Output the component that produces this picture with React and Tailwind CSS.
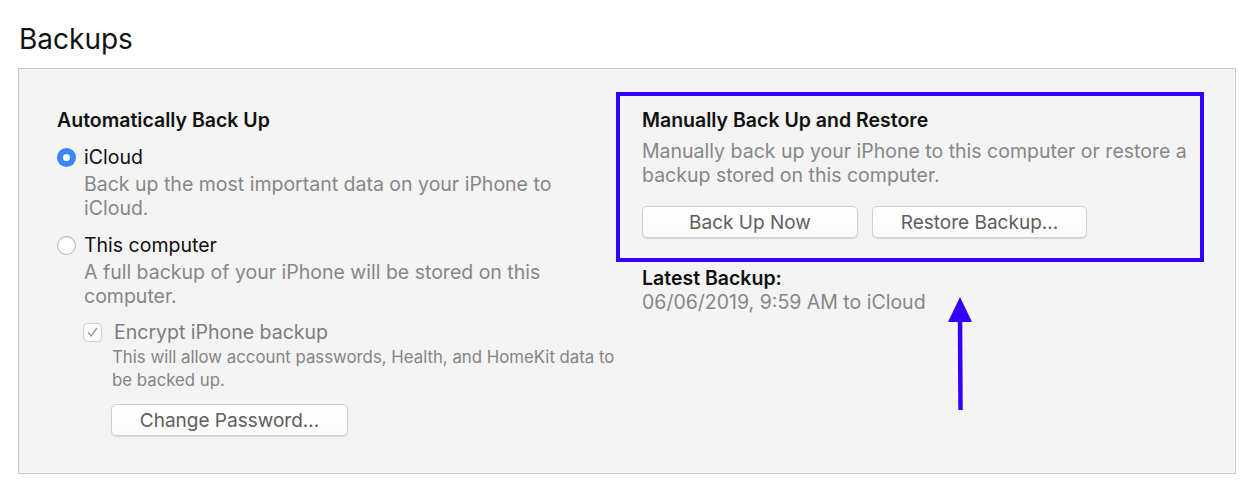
import React from "react";

function Radio({ checked }) {
  return checked ? (
    <span className="flex h-[19px] w-[19px] shrink-0 items-center justify-center rounded-full bg-[#3a86f7]">
      <span className="h-[7px] w-[7px] rounded-full bg-white" />
    </span>
  ) : (
    <span className="h-[19px] w-[19px] shrink-0 rounded-full border border-[#b5b5b5] bg-white shadow-[inset_0_1px_1px_rgba(0,0,0,0.08)]" />
  );
}

function Btn({ children, w }) {
  return (
    <button
      className={`h-[32px] ${w} rounded-[5px] border border-[#d0d0d0] bg-gradient-to-b from-white to-[#fbfbfb] text-[19px] leading-none text-[#5e5e5e] shadow-[0_1px_1px_rgba(0,0,0,0.12)]`}
    >
      {children}
    </button>
  );
}

export default function App() {
  return (
    <div
      className="relative h-[491px] w-[1253px] overflow-hidden bg-white"
      style={{ fontFamily: "Inter, 'Noto Sans', sans-serif" }}
    >
      <div className="pl-[19px] pt-[22px] text-[28px] leading-[34px] text-[#111]">Backups</div>
      <div className="ml-[18px] mt-[12px] flex h-[406px] w-[1218px] border border-[#c8c8c8] bg-[#f4f4f4]">
        {/* left column */}
        <div className="w-[597px] shrink-0 pl-[38px] pt-[39px]">
          <div className="text-[19.5px] font-semibold leading-[24px] text-[#111]">Automatically Back Up</div>
          <div className="mt-[13px] flex items-center gap-[8px]">
            <Radio checked />
            <span className="text-[19.5px] leading-[24px] text-[#111]">iCloud</span>
          </div>
          <div className="mt-[3px] pl-[27px] text-[19.5px] leading-[24px] text-[#878787]">
            Back up the most important data on your iPhone to
            <br />
            iCloud.
          </div>
          <div className="mt-[13px] flex items-center gap-[8px]">
            <Radio />
            <span className="text-[19.5px] leading-[24px] text-[#111]">This computer</span>
          </div>
          <div className="mt-[3px] pl-[27px] text-[19.5px] leading-[24px] text-[#878787]">
            A full backup of your iPhone will be stored on this
            <br />
            computer.
          </div>
          <div className="mt-[12px] flex items-center gap-[12px] pl-[26px]">
            <span className="flex h-[19px] w-[19px] items-center justify-center rounded-[4px] border border-[#d2d2d2] bg-[#fafafa]">
              <svg width="11" height="11" viewBox="0 0 11 11" fill="none">
                <path d="M1.5 6 L4.2 9 L9.5 1.5" stroke="#9a9a9a" strokeWidth="1.3" strokeLinecap="round" strokeLinejoin="round" />
              </svg>
            </span>
            <span className="text-[19.5px] leading-[24px] text-[#7d7d7d]">Encrypt iPhone backup</span>
          </div>
          <div className="mt-[2px] pl-[55px] text-[16.8px] leading-[23px] text-[#858585]">
            This will allow account passwords, Health, and HomeKit data to
            <br />
            be backed up.
          </div>
          <div className="mt-[12px] pl-[54px]">
            <Btn w="w-[237px]">Change Password...</Btn>
          </div>
        </div>
        {/* right column */}
        <div className="pt-[23px]">
          <div className="w-[588px] border-[4px] border-[#3300ff] pb-[20px] pl-[22px] pt-[12px]">
            <div className="text-[19.5px] font-semibold leading-[24px] text-[#111]">Manually Back Up and Restore</div>
            <div className="mt-[7px] text-[19.5px] leading-[24px] text-[#878787]">
              Manually back up your iPhone to this computer or restore a
              <br />
              backup stored on this computer.
            </div>
            <div className="mt-[19px] flex gap-[14px]">
              <Btn w="w-[216px]">Back Up Now</Btn>
              <Btn w="w-[215px]">Restore Backup...</Btn>
            </div>
          </div>
          <div className="mt-[4px] pl-[26px] text-[19.5px] font-semibold leading-[24px] text-[#111]">Latest Backup:</div>
          <div className="pl-[26px] text-[19.5px] leading-[24px] text-[#878787]">06/06/2019, 9:59 AM to iCloud</div>
        </div>
      </div>
      <svg className="absolute left-[946px] top-[295px]" width="28" height="118" viewBox="0 0 28 118">
        <polygon points="14,2 26,27 2,27" fill="#3300ff" />
        <line x1="14" y1="24" x2="14.5" y2="115" stroke="#3300ff" strokeWidth="4.5" />
      </svg>
    </div>
  );
}
